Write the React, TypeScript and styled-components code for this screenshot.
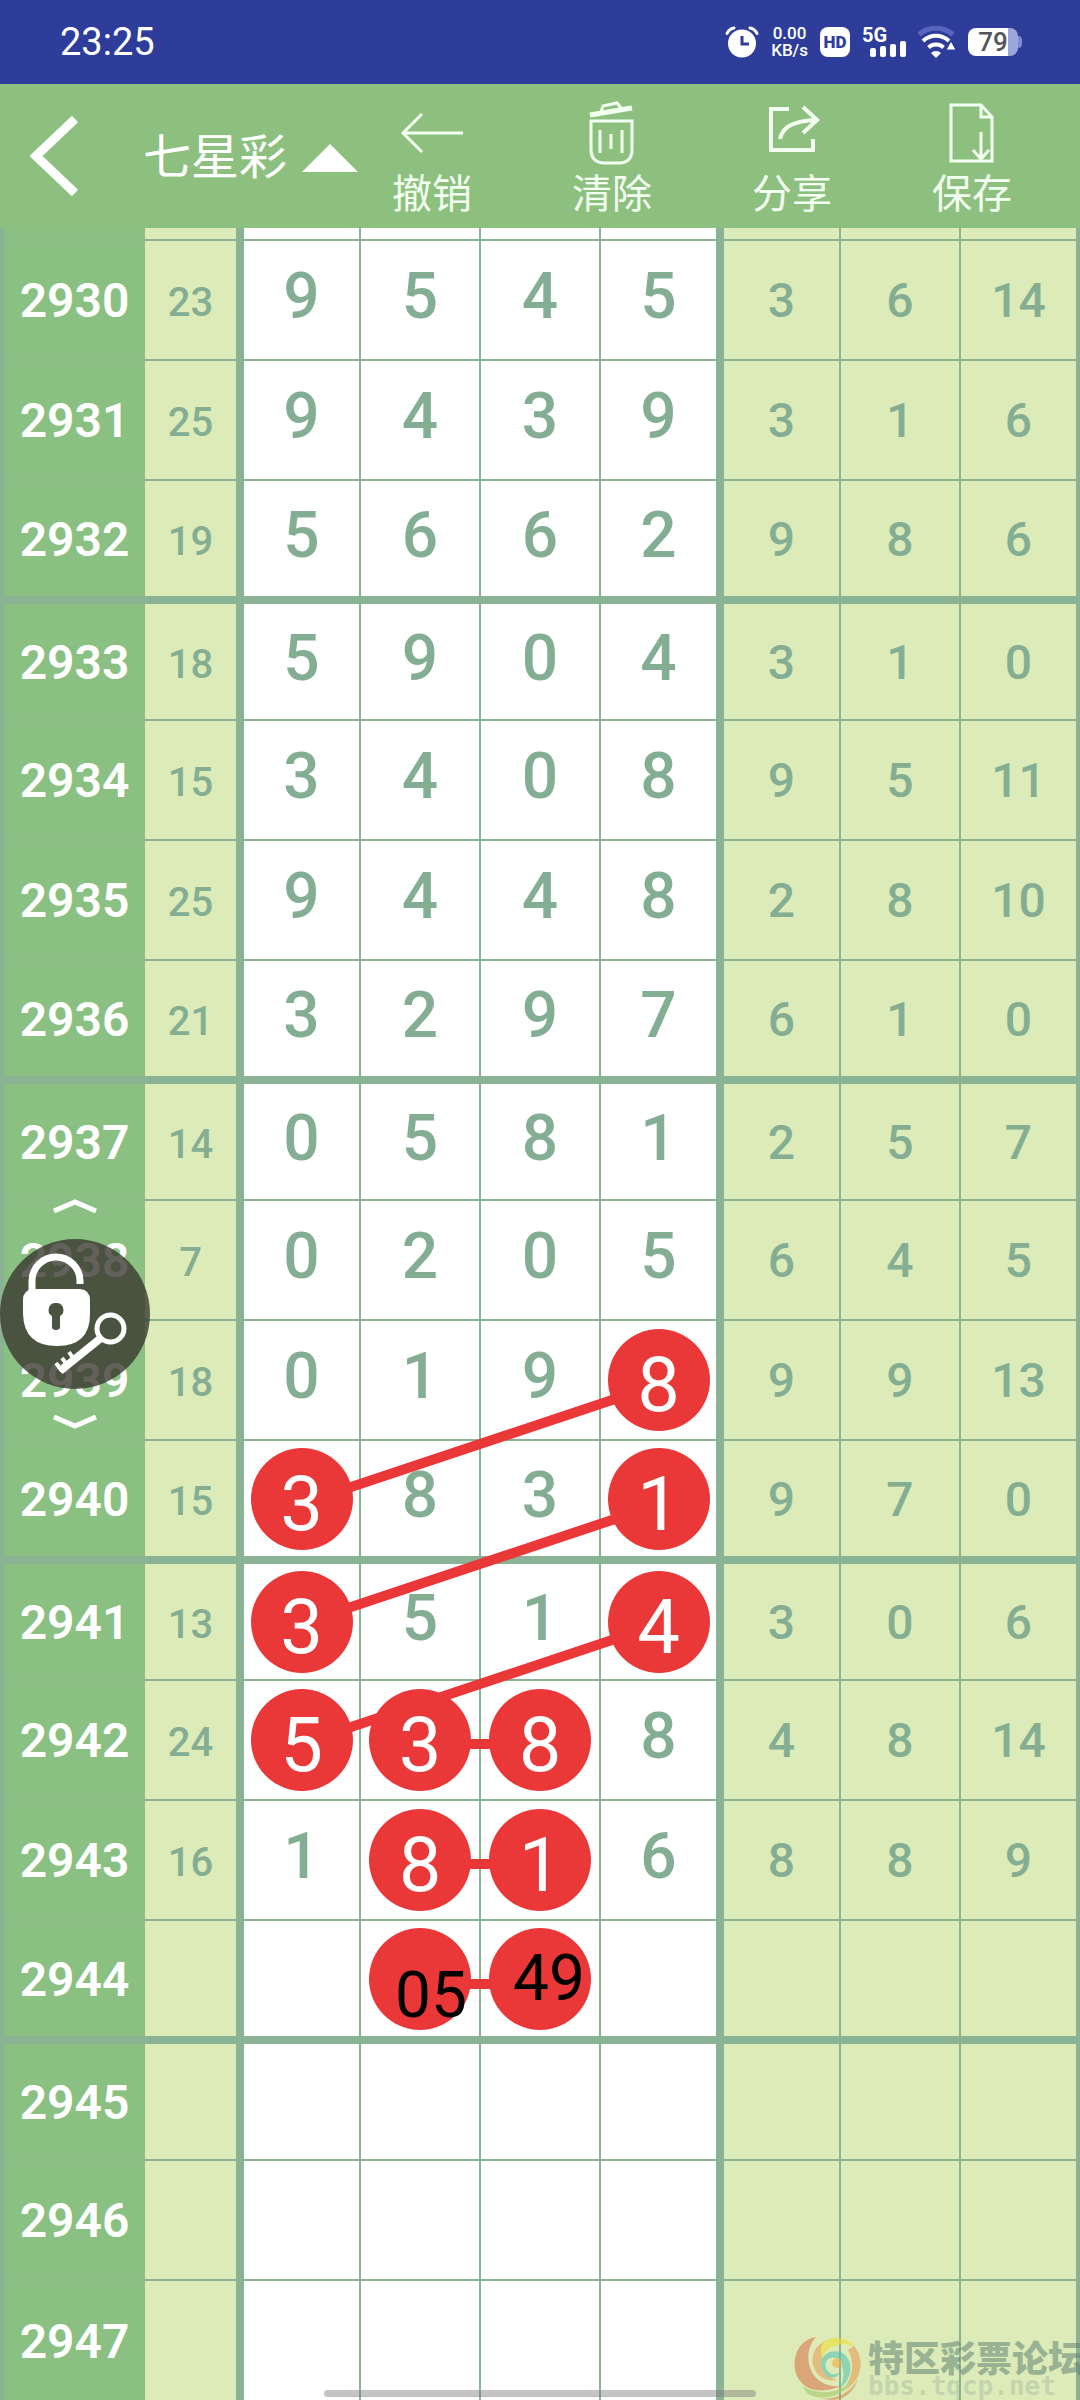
import React from "react";
import styled, { createGlobalStyle } from "styled-components";

const latin = `Roboto, "Noto Sans", "Noto Sans CJK SC", sans-serif`;
const palette = {
  status: "#2e3c9a",
  bar: "#8dc07f",
  issue: "#8ac081",
  issueLine: "#8abb89",
  pale: "#dcebb7",
  line: "#8ab294",
  digit: "#84ae94",
  red: "#ea3737",
};

const GlobalStyle = createGlobalStyle`
  *, *::before, *::after { box-sizing: border-box; }
  body { margin: 0; background: #fff; font-family: ${latin}; }
  button { font: inherit; color: inherit; background: none; border: 0; padding: 0; cursor: pointer; }
  svg { display: block; }
`;

const Page = styled.div`
  position: relative;
  overflow: hidden;
`;

/* ---------- status bar ---------- */

const StatusBar = styled.div`
  display: flex;
  align-items: center;
  justify-content: space-between;
  height: 84px;
  padding: 0 58px 0 60px;
  background: ${palette.status};
  color: #fff;
`;

const Clock = styled.time`
  font-size: 38px;
  line-height: 44px;
`;

const StatusIcons = styled.div`
  display: flex;
  align-items: center;
  gap: 12px;
`;

const NetSpeed = styled.div`
  display: flex;
  flex-direction: column;
  align-items: center;
  font-size: 17px;
  font-weight: 500;
  line-height: 17px;
`;

const HdBadge = styled.span`
  display: grid;
  place-items: center;
  width: 30px;
  height: 30px;
  border-radius: 8px;
  background: #fff;
  color: ${palette.status};
  font-size: 17px;
  font-weight: 900;
  line-height: 17px;
`;

const Signal = styled.div`
  display: grid;
  width: 44px;
  height: 30px;
`;

const SignalName = styled.span`
  grid-area: 1 / 1;
  font-size: 20px;
  font-weight: 700;
  line-height: 16px;
`;

const SignalBars = styled.div`
  grid-area: 1 / 1;
  display: flex;
  align-items: flex-end;
  justify-content: flex-end;
  gap: 4px;
`;

const SignalBar = styled.i<{ $h: number }>`
  width: 6px;
  height: ${(p) => p.$h}px;
  border-radius: 2px;
  background: #fff;
`;

const Battery = styled.div`
  display: flex;
  align-items: center;
`;

const BatteryBody = styled.span`
  display: grid;
  place-items: center;
  width: 50px;
  height: 28px;
  border-radius: 8px;
  background: linear-gradient(to right, #fff 80%, #9da6da 80%);
  color: #55545c;
  font-size: 26px;
  font-weight: 500;
  line-height: 28px;
`;

const BatteryTip = styled.i`
  width: 4px;
  height: 12px;
  border-radius: 0 4px 4px 0;
  background: #7f8bd6;
`;

/* ---------- toolbar ---------- */

const Toolbar = styled.header`
  display: flex;
  align-items: stretch;
  height: 144px;
  padding: 0 48px 0 30px;
  background: ${palette.bar};
  color: #fff;
`;

const BackButton = styled.button`
  width: 113px;
`;

const GameButton = styled.button`
  display: flex;
  align-items: center;
  gap: 15px;
  font-size: 48px;
  line-height: 56px;
  padding-top: 4px;
`;

const Actions = styled.nav`
  display: flex;
  gap: 60px;
  margin-left: auto;
`;

const ActionButton = styled.button`
  display: flex;
  flex-direction: column;
  align-items: center;
  justify-content: center;
  gap: 10px;
  width: 120px;
  padding-top: 4px;
  color: #f3fff0;
  font-size: 40px;
  line-height: 40px;
`;

/* ---------- chart ---------- */

const Chart = styled.main`
  position: relative;
`;

/* The outer rules straddle the window's edges, so half of each is cut off. */
const Grid = styled.table`
  width: calc(100% + 8px);
  margin: 0 -4px;
  table-layout: fixed;
  border-collapse: collapse;
  color: ${palette.digit};
`;

const Issue = styled.th<{ $thick?: boolean }>`
  padding: 2px 0 0;
  background: ${palette.issue};
  border-left: 8px solid ${palette.line};
  border-bottom: ${(p) => (p.$thick ? `8px solid ${palette.line}` : `2px solid ${palette.issueLine}`)};
  color: #fff;
  font-size: 48px;
  font-weight: 600;
  line-height: 56px;
`;

const Row = styled.tr<{ $thick?: boolean; $clipped?: boolean }>`
  height: ${(p) => (p.$clipped ? 12 : 120)}px;
  border-bottom: ${(p) => (p.$thick ? 8 : 2)}px solid ${palette.line};
  &:last-child,
  &:last-child ${Issue} { border-bottom: 0; }
`;

const Sum = styled.td`
  padding: 6px 0 0;
  background: ${palette.pale};
  border-right: 8px solid ${palette.line};
  font-size: 40px;
  font-weight: 500;
  line-height: 48px;
  text-align: center;
`;

const Main = styled.td<{ $last?: boolean }>`
  padding: 0;
  background: #fff;
  border-right: ${(p) => (p.$last ? 8 : 2)}px solid ${palette.line};
  font-size: 64px;
  font-weight: 500;
  line-height: 64px;
  text-align: center;
`;

const Digit = styled.span`
  display: block;
  padding-bottom: 6px;
`;

const Extra = styled.td<{ $last?: boolean }>`
  padding: 2px 0 0;
  background: ${palette.pale};
  border-right: ${(p) => (p.$last ? 8 : 2)}px solid ${palette.line};
  font-size: 48px;
  font-weight: 500;
  line-height: 56px;
  text-align: center;
`;

const Ball = styled.span`
  position: relative;
  z-index: 2;
  display: block;
  width: 102px;
  height: 102px;
  margin: 0 auto;
  padding-top: 10px;
  border-radius: 50%;
  background: ${palette.red};
  color: #fff;
  font-size: 76px;
  font-weight: 400;
  line-height: 92px;
`;

const Links = styled.svg`
  position: absolute;
  inset: 0;
  z-index: 1;
  width: 100%;
  height: 100%;
  pointer-events: none;
`;

const Note = styled.span<{ $x: number; $y: number }>`
  position: absolute;
  z-index: 3;
  left: ${(p) => (p.$x / 1080) * 100}%;
  top: ${(p) => p.$y}px;
  transform: translate(-50%, -50%);
  color: #000;
  font-size: 64px;
  line-height: 64px;
`;

/* ---------- floating pieces ---------- */

const LockWidget = styled.div`
  position: absolute;
  z-index: 4;
  left: 0;
  top: 1199px;
  display: flex;
  flex-direction: column;
  align-items: center;
  gap: 26px;
`;

const LockButton = styled.button`
  width: 150px;
  height: 150px;
  border-radius: 50%;
  background: rgba(57, 53, 46, 0.78);
`;

const Watermark = styled.div`
  position: absolute;
  z-index: 4;
  left: calc(100% - 286px);
  bottom: 0;
  display: flex;
  gap: 4px;
  white-space: nowrap;
  pointer-events: none;
`;

const WatermarkText = styled.div`
  display: flex;
  flex-direction: column;
  color: rgba(84, 122, 112, 0.5);
  font-family: "Noto Sans CJK SC", sans-serif;
  font-size: 36px;
  font-weight: 900;
  line-height: 40px;
`;

const WatermarkUrl = styled.small`
  color: rgba(130, 160, 150, 0.3);
  font-family: "DejaVu Sans Mono", monospace;
  font-size: 26px;
  line-height: 20px;
`;

const HomeBar = styled.div`
  position: absolute;
  z-index: 5;
  left: 30%;
  bottom: 3px;
  width: 40%;
  height: 7px;
  border-radius: 4px;
  background: rgba(125, 120, 125, 0.45);
`;

/* ---------- icons ---------- */

const stroke = { fill: "none", stroke: "currentColor" } as const;

const AlarmIcon = () => (
  <svg width="34" height="32" viewBox="0 0 34 32">
    <circle cx="17" cy="17.500" r="14" fill="#fff" />
    <path d="M2 7.500 Q4 3 9 2 M32 7.500 Q30 3 25 2" fill="none" stroke="#fff" strokeWidth="3" strokeLinecap="round" />
    <path d="M17 10v8h7" fill="none" stroke={palette.status} strokeWidth="3" />
  </svg>
);

const WifiIcon = () => (
  <svg width="38" height="32" viewBox="0 0 38 32" fill="none" strokeWidth="5">
    <path d="M1 8.500a26 26 0 0 1 34 0" stroke="#5a64bd" />
    <path d="M5 15a19 19 0 0 1 26 0M10.500 21.500a11 11 0 0 1 15 0" stroke="#fff" strokeWidth="4" />
    <path d="M18 32l-5-5a7 7 0 0 1 10 0z" fill="#fff" />
    <path d="M28 24l5-9 5 9z" fill="#fff" stroke={palette.status} strokeWidth="1" />
  </svg>
);

const BackIcon = () => (
  <svg width="50" height="80" viewBox="0 0 50 80" {...stroke} strokeWidth="9">
    <path d="M45 3L6 40l39 37" />
  </svg>
);

const UndoIcon = () => (
  <svg width="64" height="64" viewBox="0 0 64 64" {...stroke} strokeWidth="3">
    <path d="M63 32H3M22 13L3 32l19 19" />
  </svg>
);

const TrashIcon = () => (
  <svg width="64" height="64" viewBox="0 0 64 64" {...stroke} strokeWidth="3">
    <path d="M10 14l42-7" strokeWidth="5" />
    <path d="M21 11l2-6 14-3 4 5" />
    <path d="M11 20h41v28q0 14-13 14H25q-14 0-14-14z" />
    <path d="M20 29v23M31 33v15M42 29v23" />
  </svg>
);

const ShareIcon = () => (
  <svg width="64" height="64" viewBox="0 0 64 64" {...stroke} strokeWidth="4">
    <path d="M29 8H11v41h42V38" />
    <path d="M20 38q3-18 36-19M43 6l14 13-14 13" />
  </svg>
);

const SaveIcon = () => (
  <svg width="64" height="64" viewBox="0 0 64 64" {...stroke} strokeWidth="3">
    <path d="M41 4H11v56h41V16z" />
    <path d="M41 4v12h11M41 31v27M33 49l8 9 8-9" />
  </svg>
);

const CaretIcon = () => (
  <svg width="56" height="28" viewBox="0 0 56 28">
    <path d="M28 0l28 28H0z" fill="#fff" />
  </svg>
);

const ChevronIcon = ({ down }: { down?: boolean }) => (
  <svg width="44" height="14" viewBox="0 0 44 14" fill="none" stroke="#fff" strokeWidth="5">
    <path d={down ? "M1 2l21 9 21-9" : "M1 12l21-9 21 9"} />
  </svg>
);

const LockIcon = () => (
  <svg width="150" height="150" viewBox="0 0 150 150">
    <path d="M32 54V42a24 24 0 0 1 48 0v3" fill="none" stroke="#fff" strokeWidth="7" />
    <path
      fill="#fff"
      fillRule="evenodd"
      d="M33 50h47q10 1 10 11v14q0 32-33 32T23 75V61q0-10 10-11zM56 64a7 7 0 0 0-4 13v11q0 3 4 3t4-3V77a7 7 0 0 0-4-13z"
    />
    <circle cx="110.500" cy="89.500" r="13.500" fill="none" stroke="#fff" strokeWidth="5" />
    <path d="M101 99L60 132" stroke="#fff" strokeWidth="8" />
    <path d="M75 122l-6-9M68 127l-6-8M62 132l-6-8" stroke="#fff" strokeWidth="4" />
  </svg>
);

const SwirlIcon = () => (
  <svg width="70" height="64" viewBox="0 0 70 64" opacity="0.6">
    <path d="M22 1C2 4-4 28 4 42c10 16 28 14 44 8-18 2-30-8-33-22C13 16 16 8 22 1z" fill="#d9794f" />
    <path d="M34 4C20 8 16 22 20 32c4 10 14 14 24 12-10-2-16-10-16-20C27 14 32 8 38 5z" fill="#e8a060" />
    <path d="M30 6c10-8 26-4 32 6-8-6-18-4-26 0-4 2-6 6-8 10-2-8-1-13 2-16z" fill="#f2de36" />
    <path d="M60 10c12 14 8 38-14 46 12-10 16-28 8-42z" fill="#e89c55" />
    <path d="M27 28c0-12 15-16 23-10 10 8 8 26-4 34 6-12 4-24-4-30-6-2-12 2-10 10 2 6 8 8 14 4-4 10-18 6-19-8z" fill="#5cc4b4" />
    <path d="M8 50c16 10 38 8 50-6-8 16-28 22-44 14z" fill="#a3c866" />
    <path d="M20 62c16 3 36-2 44-20-4 16-16 22-26 22z" fill="#dc8a50" />
    <circle cx="43" cy="27" r="5" fill="#f0ae3c" />
  </svg>
);

/* ---------- data ---------- */

type Draw = { issue: number; sum?: number; main: string; extra: number[]; balls?: string };

const draws: Draw[] = [
  { issue: 2930, sum: 23, main: "9545", extra: [3, 6, 14] },
  { issue: 2931, sum: 25, main: "9439", extra: [3, 1, 6] },
  { issue: 2932, sum: 19, main: "5662", extra: [9, 8, 6] },
  { issue: 2933, sum: 18, main: "5904", extra: [3, 1, 0] },
  { issue: 2934, sum: 15, main: "3408", extra: [9, 5, 11] },
  { issue: 2935, sum: 25, main: "9448", extra: [2, 8, 10] },
  { issue: 2936, sum: 21, main: "3297", extra: [6, 1, 0] },
  { issue: 2937, sum: 14, main: "0581", extra: [2, 5, 7] },
  { issue: 2938, sum: 7, main: "0205", extra: [6, 4, 5] },
  { issue: 2939, sum: 18, main: "0198", extra: [9, 9, 13], balls: "...x" },
  { issue: 2940, sum: 15, main: "3831", extra: [9, 7, 0], balls: "x..x" },
  { issue: 2941, sum: 13, main: "3514", extra: [3, 0, 6], balls: "x..x" },
  { issue: 2942, sum: 24, main: "5388", extra: [4, 8, 14], balls: "xxx." },
  { issue: 2943, sum: 16, main: "1816", extra: [8, 8, 9], balls: ".xx." },
  { issue: 2944, main: "", extra: [], balls: ".xx." },
  { issue: 2945, main: "", extra: [] },
  { issue: 2946, main: "", extra: [] },
  { issue: 2947, main: "", extra: [] },
];

const columns = [145, 95, 120, 120, 120, 120, 120, 120, 120];

/* from (column, row) to (column, row) */
const links = [
  [3, 9, 0, 10],
  [3, 10, 0, 11],
  [3, 11, 0, 12],
  [1, 12, 2, 12],
  [1, 13, 2, 13],
  [1, 14, 2, 14],
];
const linkX = (c: number) => `${((300 + c * 120) / 1080) * 100}%`;
const linkY = (r: number) => 76 + r * 120;

const actions = [
  { label: "撤销", Icon: UndoIcon },
  { label: "清除", Icon: TrashIcon },
  { label: "分享", Icon: ShareIcon },
  { label: "保存", Icon: SaveIcon },
];

const DrawRow = ({ draw }: { draw: Draw }) => {
  const thick = draw.issue % 4 === 0;
  return (
    <Row $thick={thick}>
      <Issue scope="row" $thick={thick}>{draw.issue}</Issue>
      <Sum>{draw.sum}</Sum>
      {[0, 1, 2, 3].map((c) => (
        <Main key={c} $last={c === 3}>
          {draw.balls?.[c] === "x" ? <Ball>{draw.main[c]}</Ball> : <Digit>{draw.main[c]}</Digit>}
        </Main>
      ))}
      {[0, 1, 2].map((c) => (
        <Extra key={c} $last={c === 2}>{draw.extra[c]}</Extra>
      ))}
    </Row>
  );
};

export default function App() {
  return (
    <Page>
      <GlobalStyle />
      <StatusBar>
        <Clock>23:25</Clock>
        <StatusIcons>
          <AlarmIcon />
          <NetSpeed>
            <span>0.00</span>
            <span>KB/s</span>
          </NetSpeed>
          <HdBadge>HD</HdBadge>
          <Signal>
            <SignalName>5G</SignalName>
            <SignalBars>
              {[9, 11, 13, 16].map((h) => (
                <SignalBar key={h} $h={h} />
              ))}
            </SignalBars>
          </Signal>
          <WifiIcon />
          <Battery>
            <BatteryBody>79</BatteryBody>
            <BatteryTip />
          </Battery>
        </StatusIcons>
      </StatusBar>

      <Toolbar>
        <BackButton aria-label="返回">
          <BackIcon />
        </BackButton>
        <GameButton aria-haspopup="menu">
          七星彩
          <CaretIcon />
        </GameButton>
        <Actions>
          {actions.map(({ label, Icon }) => (
            <ActionButton key={label}>
              <Icon />
              {label}
            </ActionButton>
          ))}
        </Actions>
      </Toolbar>

      <Chart>
        <Grid>
          <colgroup>
            {columns.map((w, i) => (
              <col key={i} style={{ width: w }} />
            ))}
          </colgroup>
          <tbody>
            <Row $clipped>
              <Issue as="td" />
              <Sum />
              {[0, 1, 2, 3].map((c) => (
                <Main key={c} $last={c === 3} />
              ))}
              {[0, 1, 2].map((c) => (
                <Extra key={c} $last={c === 2} />
              ))}
            </Row>
            {draws.map((d) => (
              <DrawRow key={d.issue} draw={d} />
            ))}
          </tbody>
        </Grid>
        <Links aria-hidden="true">
          {links.map(([c1, r1, c2, r2], i) => (
            <line
              key={i}
              x1={linkX(c1)}
              y1={linkY(r1)}
              x2={linkX(c2)}
              y2={linkY(r2)}
              stroke={palette.red}
              strokeWidth="10"
            />
          ))}
        </Links>
        <Note $x={431} $y={1768}>05</Note>
        <Note $x={549} $y={1751}>49</Note>
      </Chart>

      <LockWidget>
        <ChevronIcon />
        <LockButton aria-label="锁定">
          <LockIcon />
        </LockButton>
        <ChevronIcon down />
      </LockWidget>

      <Watermark>
        <SwirlIcon />
        <WatermarkText>
          特区彩票论坛
          <WatermarkUrl>bbs.tqcp.net</WatermarkUrl>
        </WatermarkText>
      </Watermark>
      <HomeBar />
    </Page>
  );
}
